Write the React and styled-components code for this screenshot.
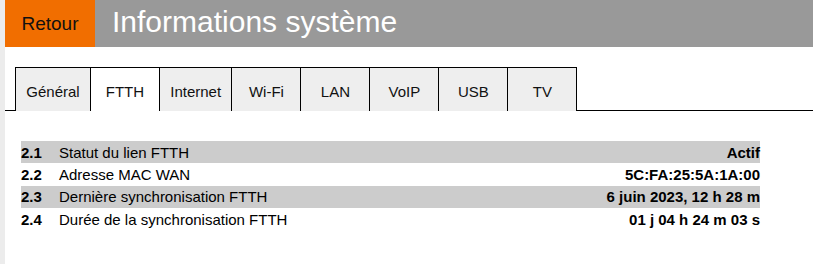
import React from "react"
import styled, { createGlobalStyle } from "styled-components"

const tabs = ["Général", "FTTH", "Internet", "Wi-Fi", "LAN", "VoIP", "USB", "TV"]

const rows = [
  { id: "2.1", label: "Statut du lien FTTH", value: "Actif" },
  { id: "2.2", label: "Adresse MAC WAN", value: "5C:FA:25:5A:1A:00" },
  { id: "2.3", label: "Dernière synchronisation FTTH", value: "6 juin 2023, 12 h 28 m" },
  { id: "2.4", label: "Durée de la synchronisation FTTH", value: "01 j 04 h 24 m 03 s" },
]

const GlobalStyle = createGlobalStyle`
  html, body {
    margin: 0;
    padding: 0;
    background: #ececec;
  }
  body {
    font-family: "Liberation Sans", Arial, sans-serif;
    color: #000;
  }
`

const App = () => {
  return (
    <>
      <GlobalStyle />
      <Page>
        <Header>
          <BackButton>Retour</BackButton>
          <Title>Informations système</Title>
        </Header>
        <TabBar>
          <TabLead />
          {tabs.map((tab) => (
            <Tab key={tab} active={tab === "FTTH"}>
              {tab}
            </Tab>
          ))}
          <TabFill />
        </TabBar>
        <InfoTable>
          {rows.map((row, index) => (
            <InfoRow key={row.id} shaded={index % 2 === 0}>
              <RowNumber>{row.id}</RowNumber>
              <RowLabel>{row.label}</RowLabel>
              <RowValue>{row.value}</RowValue>
            </InfoRow>
          ))}
        </InfoTable>
      </Page>
    </>
  )
}

export default App

const Page = styled.main`
  margin-left: 5px;
  min-height: 264px;
  background: #fff;
`

const Header = styled.header`
  display: flex;
  height: 47px;
  background: #999;
`

const BackButton = styled.div`
  display: flex;
  align-items: center;
  justify-content: center;
  width: 90px;
  padding-top: 1px;
  box-sizing: border-box;
  background: #f16e00;
  color: #111;
  font-size: 19px;
`

const Title = styled.h1`
  margin: 0;
  padding: 0 0 4px 17px;
  display: flex;
  align-items: center;
  color: #fff;
  font-size: 30px;
  font-weight: normal;
`

const TabBar = styled.nav`
  display: flex;
  height: 44px;
  margin-top: 20px;
`

const TabLead = styled.div`
  width: 10px;
  border-bottom: 1px solid #000;
`

const TabFill = styled.div`
  flex: 1;
  border-bottom: 1px solid #000;
`

const Tab = styled.div`
  display: flex;
  align-items: center;
  justify-content: center;
  box-sizing: border-box;
  min-width: 70px;
  padding: 3px 10.3px 0;
  margin-right: -1px;
  border: 1px solid #000;
  border-bottom: none;
  background: ${({ active }) => (active ? "#fff" : "#eee")};
  font-size: 15px;
  color: #111;
`

const InfoTable = styled.section`
  margin: 30px 53px 0 16px;
`

const InfoRow = styled.div`
  display: grid;
  grid-template-columns: 38px 1fr auto;
  align-items: center;
  height: 22.3px;
  background: ${({ shaded }) => (shaded ? "#ccc" : "transparent")};
  font-size: 15px;
`

const RowNumber = styled.span`
  font-weight: bold;
`

const RowLabel = styled.span``

const RowValue = styled.span`
  font-weight: bold;
  text-align: right;
`
